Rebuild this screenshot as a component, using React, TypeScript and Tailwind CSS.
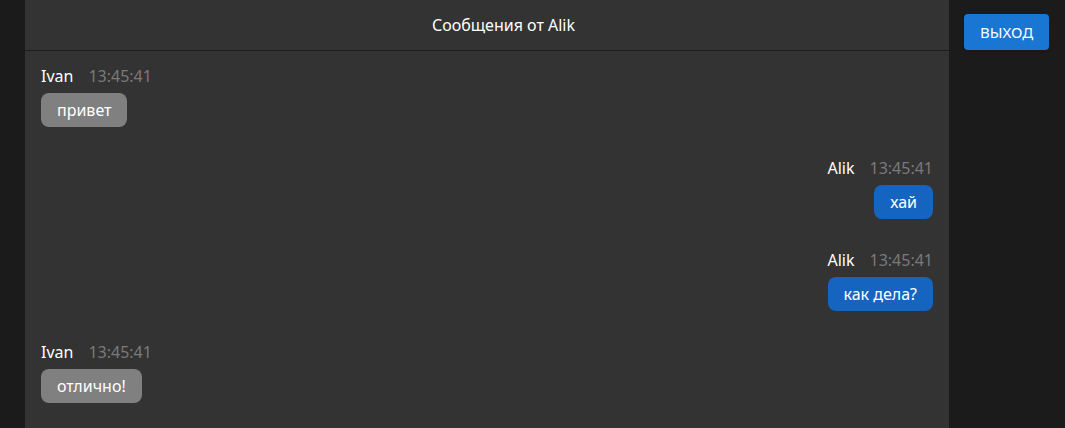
const messages = [
  { author: "Ivan", time: "13:45:41", text: "привет", mine: false },
  { author: "Alik", time: "13:45:41", text: "хай", mine: true },
  { author: "Alik", time: "13:45:41", text: "как дела?", mine: true },
  { author: "Ivan", time: "13:45:41", text: "отлично!", mine: false },
];

const App = () => {
  return (
    <div
      className="flex h-screen w-full bg-[#1b1b1b] pl-[25px] text-white"
      style={{ fontFamily: '"Noto Sans", "Open Sans", sans-serif' }}
    >
      <main className="flex flex-1 flex-col bg-[#333333]">
        <header className="flex h-[51px] items-center justify-center border-b border-[#1e1e1e] pl-[33px] text-base">
          Сообщения от Alik
        </header>
        <div className="flex flex-col gap-[29px] px-4 pt-[13px]">
          {messages.map((m, i) => (
            <div
              key={i}
              className={m.mine ? "flex flex-col items-end" : "flex flex-col items-start"}
            >
              <div className="mb-[5px] flex h-6 items-center gap-[15px] text-base">
                <span>{m.author}</span>
                <span className="text-[#7a7a7a]">{m.time}</span>
              </div>
              <div
                className={
                  m.mine
                    ? "flex h-[34px] items-center rounded-lg bg-[#1565c0] px-4 text-base"
                    : "flex h-[34px] items-center rounded-lg bg-[#808080] px-4 text-base"
                }
              >
                {m.text}
              </div>
            </div>
          ))}
        </div>
      </main>
      <aside className="w-[116px] pl-[15px] pt-[14px]">
        <button className="flex h-9 w-[85px] items-center justify-center rounded bg-[#1976d2] text-[15px] uppercase shadow">
          Выход
        </button>
      </aside>
    </div>
  );
};

export default App;
